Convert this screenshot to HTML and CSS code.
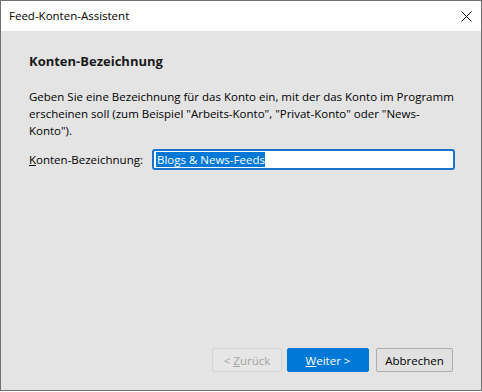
FILE: index.html
```html
<!DOCTYPE html>
<html lang="de">
<head>
    <meta charset="UTF-8">
    <title>Feed-Konten-Assistent</title>
    <link rel="stylesheet" href="styles.css">
</head>
<body>
    <div class="window">
        <div class="titlebar">
            <span class="title">Feed-Konten-Assistent</span>
            <svg class="close" width="11" height="11" viewBox="0 0 11 11">
                <path d="M0.5 0.5 L10.5 10.5 M10.5 0.5 L0.5 10.5" stroke="#000" stroke-width="1" fill="none"/>
            </svg>
        </div>

        <div class="content">
            <h2 class="page-title">Konten-Bezeichnung</h2>
            <p class="intro">Geben Sie eine Bezeichnung für das Konto ein, mit der das Konto im Programm erscheinen soll (zum Beispiel "Arbeits-Konto", "Privat-Konto" oder "News-Konto").</p>

            <div class="field">
                <label class="field-label"><u>K</u>onten-Bezeichnung:</label>
                <div class="textbox"><span class="selected">Blogs &amp; News-Feeds</span></div>
            </div>
        </div>

        <div class="buttons">
            <button class="btn btn-disabled">&lt; <u>Z</u>urück</button>
            <button class="btn btn-primary"><u>W</u>eiter &gt;</button>
            <button class="btn btn-cancel">Abbrechen</button>
        </div>
    </div>
</body>
</html>
```

FILE: styles.css
```css
* {
    margin: 0;
    padding: 0;
    box-sizing: border-box;
}

body {
    background: #ffffff;
    font-family: "Open Sans", "Noto Sans", sans-serif;
    font-size: 11.5px;
    color: #000;
}

.window {
    width: 482px;
    height: 391px;
    border: 1px solid #707070;
    background: #e4e4e5;
    display: flex;
    flex-direction: column;
}

.titlebar {
    height: 30px;
    background: #ffffff;
    display: flex;
    align-items: center;
    justify-content: space-between;
    padding: 0 9px 0 8px;
}

.title {
    font-size: 11.5px;
    line-height: 16px;
}

.close {
    display: block;
}

.content {
    flex: 1;
    padding: 22px 26px 0 28px;
}

.page-title {
    font-size: 13px;
    font-weight: 700;
    line-height: 17px;
    color: #1a1a1a;
}

.intro {
    margin-top: 18px;
    line-height: 17px;
}

.field {
    display: flex;
    align-items: center;
    margin-top: 10px;
}

.field-label {
    width: 123px;
    flex: none;
}

.textbox {
    flex: 1;
    height: 21px;
    border: 2px solid #1b72cc;
    border-radius: 3px;
    background: #ffffff;
    padding: 0 2px;
    display: flex;
    align-items: center;
}

.selected {
    background: #0078d7;
    color: #ffffff;
    line-height: 15px;
    padding-left: 1px;
}

.buttons {
    display: flex;
    justify-content: flex-end;
    padding: 0 28px 18px 0;
}

.btn {
    height: 24px;
    font-family: inherit;
    font-size: 11.5px;
    border-radius: 2px;
    border: 1px solid #adadad;
    background: #e1e1e1;
    color: #000;
}

.btn-disabled {
    width: 70px;
    border-color: #d4d4d4;
    background: #e6e6e6;
    color: #a3a3a3;
}

.btn-primary {
    width: 82px;
    margin-left: 5px;
    border-color: #0078d7;
    background: #0078d7;
    color: #ffffff;
}

.btn-cancel {
    width: 77px;
    margin-left: 7px;
}
```
